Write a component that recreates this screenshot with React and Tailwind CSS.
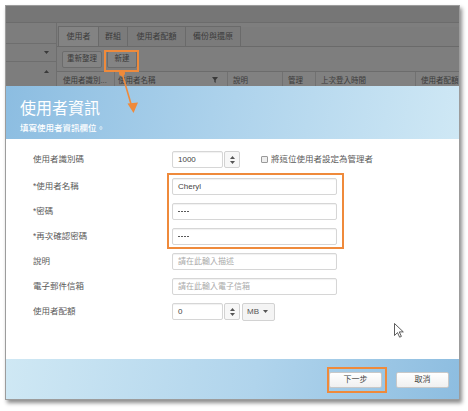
import React from "react";

function Spinner() {
  return (
    <div className="w-[16px] h-full border border-[#d2d2d2] rounded-[2px] bg-[#f7f7f7] flex flex-col items-center justify-center gap-[2px] ml-[1px]">
      <svg width="5" height="3" viewBox="0 0 5 3"><path d="M2.5 0L5 3H0z" fill="#555" /></svg>
      <svg width="5" height="3" viewBox="0 0 5 3"><path d="M0 0h5L2.5 3z" fill="#555" /></svg>
    </div>
  );
}

function Label({ children }) {
  return <div className="w-[139px] shrink-0 text-[8.5px] text-[#5a5a5a] leading-[17px]">{children}</div>;
}

function TextInput({ value, placeholder }) {
  return (
    <div className="w-[165px] h-[17px] border border-[#d6d6d6] rounded-[2px] bg-white shadow-[inset_0_1px_1px_rgba(0,0,0,0.06)] flex items-center pl-[5px] text-[8px]">
      {value ? <span className="text-[#444]">{value}</span> : <span className="text-[#aaa]">{placeholder}</span>}
    </div>
  );
}

function NumberInput({ value }) {
  return (
    <div className="flex h-[17px]">
      <div className="w-[51px] h-full border border-[#d6d6d6] rounded-[2px] bg-white shadow-[inset_0_1px_1px_rgba(0,0,0,0.06)] flex items-center pl-[5px] text-[8px] text-[#444]">
        {value}
      </div>
      <Spinner />
    </div>
  );
}

function Dots() {
  return (
    <span className="flex gap-[1.5px] items-center">
      <span className="w-[1.6px] h-[1.6px] rounded-full bg-[#444]"></span>
      <span className="w-[1.6px] h-[1.6px] rounded-full bg-[#444]"></span>
      <span className="w-[1.6px] h-[1.6px] rounded-full bg-[#444]"></span>
      <span className="w-[1.6px] h-[1.6px] rounded-full bg-[#444]"></span>
    </span>
  );
}

export default function App() {
  return (
    <div className="w-[468px] h-[411px] bg-white relative overflow-hidden font-['Liberation_Sans','Noto_Sans_CJK_TC',sans-serif]">
      <div className="pt-[5px] pl-[5px]">
        <div className="w-[455px] h-[395px] flex flex-col border border-[#9c9c9c] shadow-[2px_3px_4px_rgba(0,0,0,0.45)] overflow-hidden">
          {/* darkened backdrop */}
          <div className="h-[80px] shrink-0 flex flex-col bg-[#7a7a7a] text-[#3a3a3a]">
            <div className="h-[17px] shrink-0 bg-[#767676] border-b border-[#6c6c6c]"></div>
            <div className="flex-1 flex min-h-0">
              <div className="w-[51px] shrink-0 flex flex-col bg-[#7d7d7d] border-r border-[#6e6e6e]">
                <div className="h-[21px] border-b border-[#6e6e6e]"></div>
                <div className="h-[18px] border-b border-[#6e6e6e] flex items-center justify-end pr-[7px]">
                  <svg width="5" height="3" viewBox="0 0 5 3"><path d="M0 0h5L2.5 3z" fill="#3a3a3a" /></svg>
                </div>
                <div className="flex-1 flex justify-end pr-[7px] pt-[8px]">
                  <svg width="5" height="3" viewBox="0 0 5 3"><path d="M2.5 0L5 3H0z" fill="#3a3a3a" /></svg>
                </div>
              </div>
              <div className="flex-1 flex flex-col bg-[#7c7c7c] min-w-0">
                <div className="h-[4px] shrink-0 bg-[#7e7e7e]"></div>
                <div className="h-[20px] shrink-0 flex items-end border-b border-[#6a6a6a] text-[8px]">
                  <div className="w-[41px] h-[20px] bg-[#838383] border border-b-0 border-[#6a6a6a] flex items-center justify-center ml-[1px]">使用者</div>
                  <div className="w-[29px] h-[20px] border-r border-t border-[#6a6a6a] bg-[#7b7b7b] flex items-center justify-center">群組</div>
                  <div className="w-[58px] h-[20px] border-r border-t border-[#6a6a6a] bg-[#7b7b7b] flex items-center justify-center">使用者配額</div>
                  <div className="w-[55px] h-[20px] border-r border-t border-[#6a6a6a] bg-[#7b7b7b] flex items-center justify-center">備份與還原</div>
                </div>
                <div className="h-[25px] shrink-0 flex items-center gap-[5px] pl-[5px] bg-[#7e7e7e] border-b border-[#6c6c6c] text-[7.5px]">
                  <div className="h-[17px] w-[40px] border border-[#6c6c6c] bg-[#848484] rounded-[2px] flex items-center justify-center">重新整理</div>
                  <div className="h-[17px] w-[30px] border border-[#6c6c6c] bg-[#848484] rounded-[2px] flex items-center justify-center">新建</div>
                </div>
                <div className="flex-1 flex bg-[#818181] text-[7.5px] overflow-hidden">
                  <div className="w-[58px] shrink-0 border-r border-[#717171] pl-[6px] pt-[3px] whitespace-nowrap overflow-hidden">使用者識別...</div>
                  <div className="w-[113px] shrink-0 border-r border-[#717171] pl-[3px] pt-[3px] flex justify-between pr-[9px]">
                    <span>使用者名稱</span>
                    <svg width="6" height="6" viewBox="0 0 6 6" className="mt-[2px]"><path d="M0 0h6L3.7 3v3L2.3 5V3z" fill="#3a3a3a" /></svg>
                  </div>
                  <div className="w-[55px] shrink-0 border-r border-[#717171] pl-[5px] pt-[3px]">說明</div>
                  <div className="w-[33px] shrink-0 border-r border-[#717171] pl-[5px] pt-[3px]">管理</div>
                  <div className="w-[100px] shrink-0 border-r border-[#717171] pl-[5px] pt-[3px]">上次登入時間</div>
                  <div className="flex-1 pl-[5px] pt-[3px] whitespace-nowrap overflow-hidden">使用者配額</div>
                </div>
              </div>
            </div>
          </div>

          {/* modal header */}
          <div className="h-[53px] shrink-0 bg-[linear-gradient(100deg,#8cbde1_0%,#aed3ec_50%,#cfe8f5_100%)] pl-[14px] pt-[12px]">
            <div className="text-[16px] leading-[21px] text-white">使用者資訊</div>
            <div className="text-[8.5px] leading-[10px] text-white font-medium mt-[4px]">填寫使用者資訊欄位。</div>
          </div>

          {/* modal body */}
          <div className="flex-1 bg-white pl-[27px] pt-[12px] flex flex-col gap-[8px]">
            <div className="flex items-center h-[17px] mb-[2px]">
              <Label>使用者識別碼</Label>
              <NumberInput value="1000" />
              <div className="flex items-center ml-[21px] gap-[3px]">
                <div className="w-[7px] h-[7px] border border-[#9a9a9a] bg-[#eee] rounded-[1px]"></div>
                <span className="text-[8.5px] text-[#5a5a5a]">將這位使用者設定為管理者</span>
              </div>
            </div>
            <div className="flex items-center h-[17px]">
              <Label>*使用者名稱</Label>
              <TextInput value="Cheryl" />
            </div>
            <div className="flex items-center h-[17px]">
              <Label>*密碼</Label>
              <TextInput value={<Dots />} />
            </div>
            <div className="flex items-center h-[17px]">
              <Label>*再次確認密碼</Label>
              <TextInput value={<Dots />} />
            </div>
            <div className="flex items-center h-[17px]">
              <Label>說明</Label>
              <TextInput placeholder="請在此輸入描述" />
            </div>
            <div className="flex items-center h-[17px]">
              <Label>電子郵件信箱</Label>
              <TextInput placeholder="請在此輸入電子信箱" />
            </div>
            <div className="flex items-center h-[17px]">
              <Label>使用者配額</Label>
              <NumberInput value="0" />
              <div className="ml-[2px] w-[33px] h-[18px] border border-[#d2d2d2] rounded-[2px] bg-[#f4f4f4] flex items-center justify-between pl-[4px] pr-[6px] text-[8px] text-[#555]">
                <span>MB</span>
                <svg width="5" height="3" viewBox="0 0 5 3"><path d="M0 0h5L2.5 3z" fill="#555" /></svg>
              </div>
            </div>
          </div>

          {/* modal footer */}
          <div className="h-[40px] shrink-0 bg-[linear-gradient(100deg,#cfe8f4_0%,#b0d4ec_55%,#8dbde0_100%)] flex items-center justify-end gap-[14px] pr-[10px] pt-[2px]">
            <div className="w-[53px] h-[16px] border border-[#c8c8c8] rounded-[2px] bg-[linear-gradient(#ffffff,#f0f0f0)] flex items-center justify-center text-[8px] text-[#444]">下一步</div>
            <div className="w-[53px] h-[16px] border border-[#c8c8c8] rounded-[2px] bg-[linear-gradient(#ffffff,#f0f0f0)] flex items-center justify-center text-[8px] text-[#444]">取消</div>
          </div>
        </div>
      </div>

      {/* annotation overlays */}
      <div className="absolute left-[104px] top-[50px] w-[35px] h-[22px] border-2 border-[#ef8a3b]"></div>
      <div className="absolute left-[167px] top-[173px] w-[177px] h-[76px] border-2 border-[#ef8a3b]"></div>
      <div className="absolute left-[327px] top-[367px] w-[60px] h-[26px] border-2 border-[#ef8a3b]"></div>
      <svg className="absolute left-0 top-0 pointer-events-none" width="468" height="411" viewBox="0 0 468 411">
        <line x1="122" y1="73" x2="131" y2="104" stroke="#ef8a3b" strokeWidth="1.6" />
        <circle cx="122" cy="73" r="3" fill="#ef8a3b" />
        <path d="M127.5 103.5L138 102.5L133.5 113z" fill="#ef8a3b" />
      </svg>
      <svg className="absolute left-[394px] top-[323px]" width="11" height="16" viewBox="0 0 11 16">
        <path d="M0.5 0.5V12.5L3.5 9.6L5.6 14.2L7.4 13.4L5.3 8.9H9.3Z" fill="white" stroke="#333" strokeWidth="0.8" strokeLinejoin="round" />
      </svg>
    </div>
  );
}
